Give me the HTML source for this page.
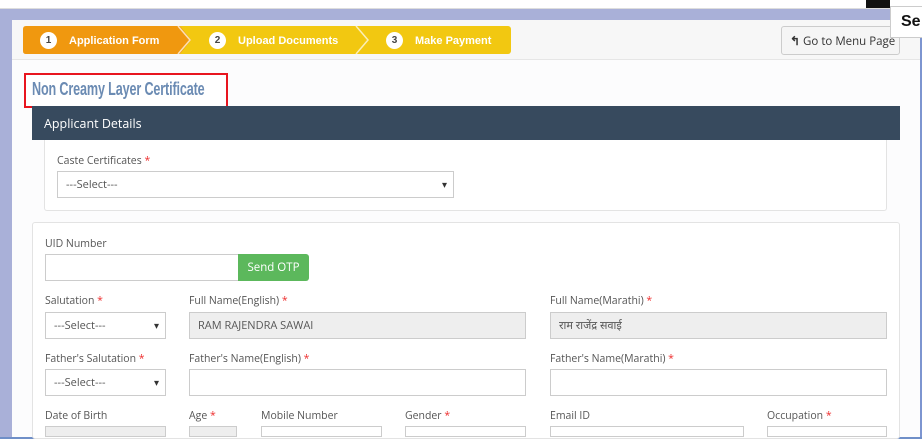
<!DOCTYPE html>
<html><head><meta charset="utf-8"><style>
*{box-sizing:border-box;margin:0;padding:0}
body{width:922px;height:446px;overflow:hidden;background:#fff;font-family:"Open Sans","Liberation Sans","Noto Sans CJK SC",sans-serif;font-size:11px;color:#555;position:relative}
.a{position:absolute}
.lbl{position:absolute;font-size:10.5px;color:#555}
.lbl b{color:#e33;font-weight:normal}
.in{position:absolute;height:27px;border:1px solid #ccc;background:#fff;font-size:11px;color:#555;padding:0 8px;line-height:25px}
.ro{background:#eee}
.sel:after{content:"▾";position:absolute;right:6px;top:0;font-size:10px;color:#333}
.step{position:absolute;top:27px;height:28px;line-height:28px;color:#fff;font-weight:bold;font-size:11px;font-family:"Liberation Sans",sans-serif}
.num{display:inline-block;width:17px;height:17px;border-radius:50%;background:#fff;color:#444;text-align:center;line-height:17px;font-size:10px;margin-right:12px;vertical-align:middle;position:relative;top:-1px}
</style></head><body>
<div class="a" style="left:0;top:0;width:922px;height:9px;background:#fff;border-bottom:1px solid #ddd"></div>
<div class="a" style="left:0;top:9px;width:922px;height:430px;background:#a9b0d8"></div>
<div class="a" style="left:866px;top:0;width:24px;height:8px;background:#111"></div>
<div class="a" style="left:12px;top:20px;width:908px;height:419px;background:#fcfcfd"></div>
<div class="a" style="left:12px;top:20px;width:908px;height:40px;background:#f7f7f7;border-bottom:1px solid #e6e6e6"></div>
<div class="a" style="left:920px;top:20px;width:2px;height:419px;background:#7d95d0"></div>
<div class="a" style="left:0;top:437px;width:922px;height:2px;background:#6f8fc8"></div>
<div class="a" style="left:0;top:439px;width:922px;height:7px;background:#fff"></div>
<svg class="a" style="left:23px;top:26px" width="490" height="28">
<rect x="155" y="0" width="333" height="28" rx="3" fill="#f2c811"/>
<path d="M3 0H157L168 14L157 28H3Q0 28 0 25V3Q0 0 3 0Z" fill="#f0980f"/>
<path d="M155 0L167 14L155 28" stroke="#fff" stroke-width="1.5" fill="none" opacity=".7"/>
<path d="M333 0L345 14L333 28" stroke="#fff" stroke-width="1.5" fill="none" opacity=".7"/>
</svg>
<div class="step" style="left:40px"><span class="num">1</span>Application Form</div>
<div class="step" style="left:209px"><span class="num">2</span>Upload Documents</div>
<div class="step" style="left:386px"><span class="num">3</span>Make Payment</div>
<div class="a" style="left:781px;top:26px;width:119px;height:29px;border:1px solid #ccc;border-radius:3px;background:#f5f5f5;font-size:11.5px;color:#333;line-height:28px;padding-left:8px;white-space:nowrap;overflow:hidden"><b style="font-size:12px">↰</b> Go to Menu Page</div>
<div class="a" style="left:890px;top:6px;width:32px;height:32px;background:#fff;border:1px solid #ccc;border-right:none;font-weight:bold;font-size:16px;color:#111;line-height:30px;padding-left:10px;font-family:'Liberation Sans',sans-serif">Se</div>
<div class="a" style="left:24px;top:73px;width:204px;height:35px;border:2px solid #e8151f;background:#fff"></div>
<div class="a" style="left:32px;top:79px;font-family:'Liberation Sans Narrow','Liberation Sans',sans-serif;font-size:18px;font-weight:bold;color:#6b8bb3;transform:scaleX(.7);transform-origin:left;white-space:nowrap;letter-spacing:-.2px">Non Creamy Layer Certificate</div>
<div class="a" style="left:32px;top:106px;width:868px;height:34px;background:#374a5e;color:#fff;font-size:12.5px;line-height:35px;padding-left:12px">Applicant Details</div>
<div class="a" style="left:44px;top:140px;width:843px;height:71px;border:1px solid #e3e3e3;border-top:none;background:#fff;border-radius:0 0 3px 3px"></div>
<div class="lbl" style="left:57px;top:154px">Caste Certificates <b>*</b></div>
<div class="in sel" style="left:57px;top:171px;width:397px">---Select---</div>
<div class="a" style="left:32px;top:222px;width:868px;height:217px;border:1px solid #e3e3e3;background:#fff;border-radius:3px"></div>
<div class="lbl" style="left:45px;top:237px">UID Number</div>
<div class="in" style="left:45px;top:254px;width:194px"></div>
<div class="a" style="left:238px;top:254px;width:71px;height:27px;background:#5cb85c;border-radius:0 3px 3px 0;color:#fff;font-size:11.5px;text-align:center;line-height:27px">Send OTP</div>
<div class="lbl" style="left:45px;top:294px">Salutation <b>*</b></div>
<div class="lbl" style="left:189px;top:294px">Full Name(English) <b>*</b></div>
<div class="lbl" style="left:550px;top:294px">Full Name(Marathi) <b>*</b></div>
<div class="in sel" style="left:45px;top:312px;width:121px">---Select---</div>
<div class="in ro" style="left:189px;top:312px;width:337px">RAM RAJENDRA SAWAI</div>
<div class="in ro" style="left:550px;top:312px;width:337px">राम राजेंद्र सवाई</div>
<div class="lbl" style="left:45px;top:352px">Father's Salutation <b>*</b></div>
<div class="lbl" style="left:189px;top:352px">Father's Name(English) <b>*</b></div>
<div class="lbl" style="left:550px;top:352px">Father's Name(Marathi) <b>*</b></div>
<div class="in sel" style="left:45px;top:369px;width:121px">---Select---</div>
<div class="in" style="left:189px;top:369px;width:337px"></div>
<div class="in" style="left:550px;top:369px;width:337px"></div>
<div class="lbl" style="left:45px;top:409px">Date of Birth</div>
<div class="lbl" style="left:189px;top:409px">Age <b>*</b></div>
<div class="lbl" style="left:261px;top:409px">Mobile Number</div>
<div class="lbl" style="left:405px;top:409px">Gender <b>*</b></div>
<div class="lbl" style="left:550px;top:409px">Email ID</div>
<div class="lbl" style="left:767px;top:409px">Occupation <b>*</b></div>
<div class="in ro" style="left:45px;top:426px;width:121px;height:11px"></div>
<div class="in ro" style="left:189px;top:426px;width:48px;height:11px"></div>
<div class="in" style="left:261px;top:426px;width:121px;height:11px"></div>
<div class="in" style="left:405px;top:426px;width:121px;height:11px"></div>
<div class="in" style="left:550px;top:426px;width:194px;height:11px"></div>
<div class="in" style="left:767px;top:426px;width:120px;height:11px"></div>
</body></html>
